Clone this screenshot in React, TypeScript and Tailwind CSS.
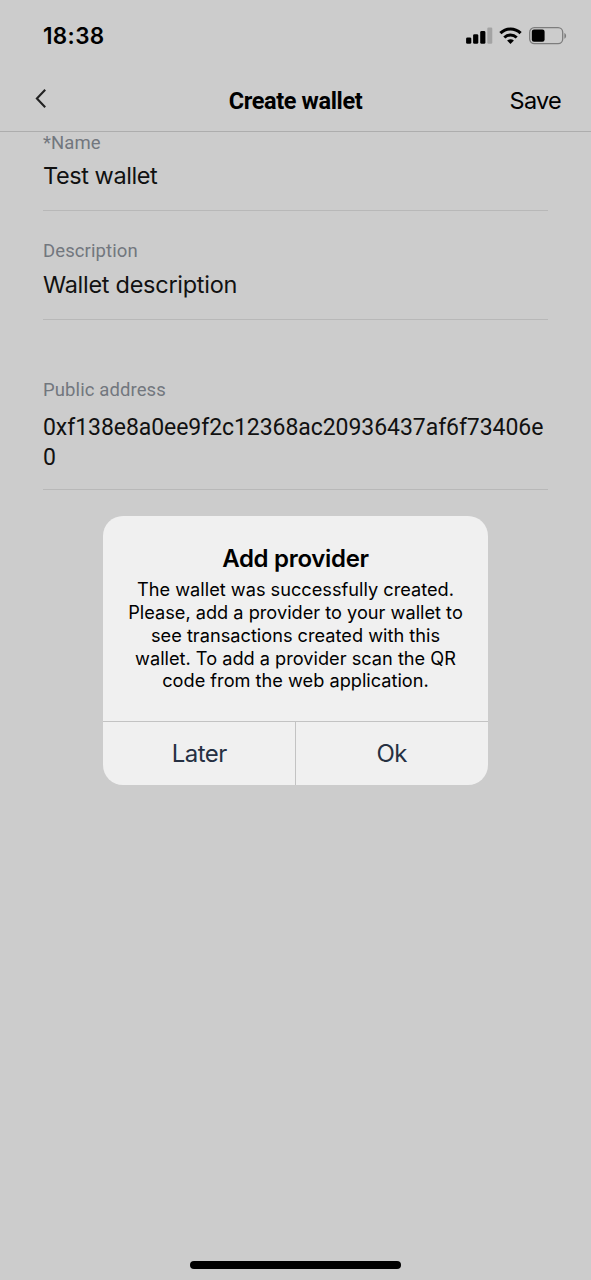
import React from "react";

function SignalIcon() {
  return (
    <svg width="28" height="18" viewBox="0 0 28 18">
      <rect x="0.1" y="10.4" width="5.2" height="6.4" rx="1.4" fill="#000" />
      <rect x="7.1" y="7.2" width="5.2" height="9.6" rx="1.4" fill="#000" />
      <rect x="14.2" y="4" width="5.2" height="12.8" rx="1.4" fill="#000" />
      <rect x="21.3" y="0.5" width="5" height="16.3" rx="1.3" fill="#a3a3a3" />
    </svg>
  );
}

function WifiIcon() {
  return (
    <svg width="24" height="18" viewBox="0 0 24 18" fill="none">
      <path d="M1.4 6.2C7.2 0.6 15.8 0.6 21.6 6.2" stroke="#000" strokeWidth="3.1" />
      <path d="M5.3 10.5C8.9 7.1 14.1 7.1 17.7 10.5" stroke="#000" strokeWidth="3" />
      <path d="M11.5 17L8.1 13.6C10 11.9 13 11.9 14.9 13.6Z" fill="#000" />
    </svg>
  );
}

function BatteryIcon() {
  return (
    <svg width="39" height="19" viewBox="0 0 39 19" fill="none">
      <rect x="0.7" y="0.7" width="33" height="16" rx="4.6" stroke="#7d7d7d" strokeWidth="1.3" />
      <rect x="2.8" y="2.5" width="12.8" height="12.2" rx="2.2" fill="#000" />
      <path d="M35.4 6C37.7 7 37.7 10.8 35.4 11.8Z" fill="#7d7d7d" />
    </svg>
  );
}

function Field({ label, children, className }: { label: string; children: React.ReactNode; className: string }) {
  return (
    <div className={`flex flex-col border-b border-[#b8b8b8] ${className}`}>
      <span className="h-6 whitespace-nowrap font-['Roboto',sans-serif] text-[18.5px] leading-6 tracking-[0.1px] text-[#72777e]">
        {label}
      </span>
      {children}
    </div>
  );
}

export default function App() {
  return (
    <div className="relative flex h-[1280px] w-[591px] flex-col overflow-hidden bg-[#cccccc] font-['Inter',sans-serif] text-[#111111]">
      <div className="flex h-[70px] shrink-0 items-start justify-between pl-[43px] pr-[23px] text-black">
        <span className="mt-[21px] whitespace-nowrap text-[22.5px] font-semibold leading-[30px] tracking-[0.35px]">18:38</span>
        <div className="mt-[27px] flex items-start">
          <SignalIcon />
          <div className="ml-[5px]"><WifiIcon /></div>
          <div className="ml-[6px]"><BatteryIcon /></div>
        </div>
      </div>
      <header className="grid h-[62px] shrink-0 grid-cols-3 items-center border-b border-[#adadad] text-black">
        <svg className="-mt-1 ml-[34px]" width="14" height="22" viewBox="0 0 14 22" fill="none">
          <path d="M11.2 1.8L2.9 10.5L11.2 19.2" stroke="#222" strokeWidth="2.1" />
        </svg>
        <h1 className="whitespace-nowrap text-center font-['Roboto',sans-serif] text-[23.5px] font-bold leading-[30px] tracking-[-0.37px]">
          Create wallet
        </h1>
        <span className="pr-[30px] text-right text-[23.5px] leading-[30px] tracking-[-0.75px]">Save</span>
      </header>
      <main className="flex flex-col px-[43px]">
        <Field label="*Name" className="-mt-px h-[80px]">
          <span className="mt-[6px] whitespace-nowrap text-[23.5px] leading-[30px] tracking-[-0.43px]">Test wallet</span>
        </Field>
        <Field label="Description" className="mt-7 h-[81px]">
          <span className="mt-[7px] whitespace-nowrap text-[23.5px] leading-[30px] tracking-[-0.28px]">Wallet description</span>
        </Field>
        <Field label="Public address" className="mt-[58px] h-[112px]">
          <span className="mt-[11px] whitespace-nowrap font-['Roboto',sans-serif] text-[23px] leading-[30px] tracking-[-0.06px]">
            0xf138e8a0ee9f2c12368ac20936437af6f73406e
            <br />0
          </span>
        </Field>
      </main>
      <div className="absolute left-[103px] top-[516px] flex h-[269px] w-[385px] flex-col overflow-hidden rounded-[20px] bg-[#f0f0f0] text-center">
        <div className="flex h-[205px] flex-col items-center pt-[28px] text-black">
          <h2 className="whitespace-nowrap text-[24px] font-semibold leading-[30px] tracking-[-0.3px]">Add provider</h2>
          <p className="mt-[4px] whitespace-nowrap text-[18.2px] leading-[22.86px]">
            The wallet was successfully created.
            <br />Please, add a provider to your wallet to
            <br />see transactions created with this
            <br />wallet. To add a provider scan the QR
            <br />code from the web application.
          </p>
        </div>
        <div className="grid h-16 grid-cols-2 border-t border-[#c3c3c3] text-[24px] tracking-[-0.5px] text-[#263042]">
          <button className="border-r border-[#c3c3c3] pl-px">Later</button>
          <button>Ok</button>
        </div>
      </div>
      <div className="mx-auto mb-[11px] mt-auto h-2 w-[211px] shrink-0 rounded-full bg-black" />
    </div>
  );
}
